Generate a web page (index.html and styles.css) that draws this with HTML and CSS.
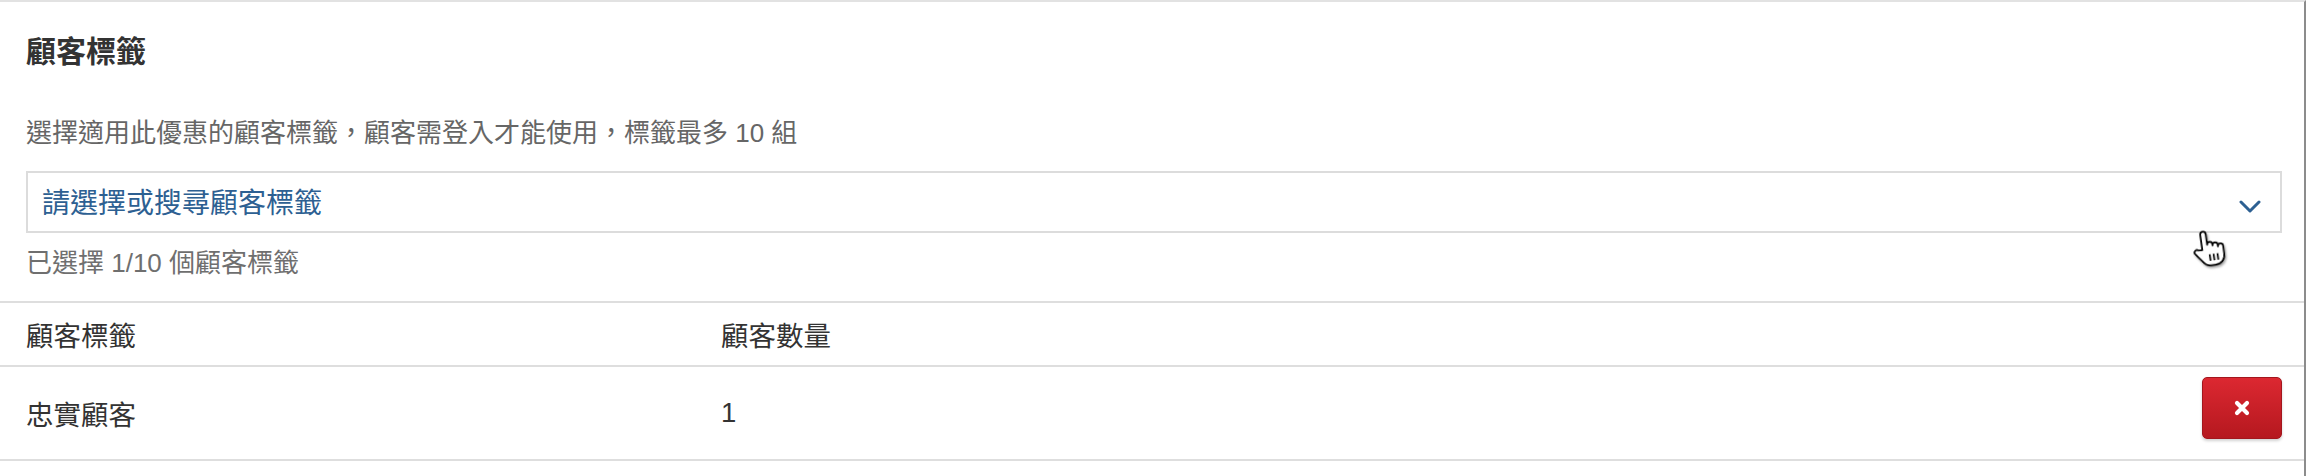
FILE: index.html
```html
<!DOCTYPE html>
<html lang="zh-Hant">
<head>
    <meta charset="UTF-8">
    <meta name="viewport" content="width=device-width, initial-scale=1.0">
    <title>顧客標籤</title>
    <link rel="stylesheet" href="styles.css">
</head>
<body>

    <div class="panel">
        <section class="tag-section">
            <h2 class="section-title">顧客標籤</h2>
            <p class="section-desc">選擇適用此優惠的顧客標籤，顧客需登入才能使用，標籤最多 10 組</p>

            <div class="tag-select">
                <span class="tag-select-placeholder">請選擇或搜尋顧客標籤</span>
                <svg class="tag-select-arrow" width="22" height="13" viewBox="0 0 22 13">
                    <polyline points="2,2 11,11 20,2" fill="none" stroke="currentColor" stroke-width="3" stroke-linecap="round" stroke-linejoin="round"/>
                </svg>
            </div>

            <p class="tag-count">已選擇 1/10 個顧客標籤</p>
        </section>

        <!-- Selected tags -->
        <div class="tag-table">
            <div class="tag-row tag-head">
                <div class="tag-cell">顧客標籤</div>
                <div class="tag-cell">顧客數量</div>
                <div class="tag-cell"></div>
            </div>
            <div class="tag-row tag-body">
                <div class="tag-cell">忠實顧客</div>
                <div class="tag-cell">1</div>
                <div class="tag-cell tag-action">
                    <button class="btn-remove" type="button" aria-label="移除">
                        <svg width="16" height="16" viewBox="0 0 16 16">
                            <path d="M3 3 L13 13 M13 3 L3 13" stroke="#fff" stroke-width="4.2" stroke-linecap="round"/>
                        </svg>
                    </button>
                </div>
            </div>
        </div>

        <!-- mouse pointer captured in the screenshot -->
        <svg class="pointer" width="34" height="40" viewBox="0 0 26 30">
            <path d="M8.5 16 V4.2 a2.1 2.1 0 0 1 4.2 0 V12.5 a2 2 0 0 1 4 0 V13.5 a2 2 0 0 1 4 0 V14.8 a2 2 0 0 1 4 0 V21 c0 4.5 -3 7.5 -7.5 7.5 H13.8 c-3 0 -4.8 -1.6 -6.4 -4 L2.6 18.3 a1.9 1.9 0 0 1 2.9 -2.4 Z" fill="#fff" stroke="#000" stroke-width="1.3" stroke-linejoin="round"/>
            <path d="M13.6 20 V25 M16.6 20 V25 M19.6 20 V25" stroke="#000" stroke-width="1.3"/>
        </svg>
    </div>

</body>
</html>
```

FILE: styles.css
```css
body {
    margin: 0;
    background-color: #fff;
    font-family: 'Liberation Sans', 'Noto Sans CJK TC', sans-serif;
    color: #333;
}

.panel {
    position: relative;
    height: 474px;
    overflow: hidden;
    border-top: 2px solid #e2e2e2;
    border-right: 2px solid #8c8c8c;
}

.tag-section {
    padding: 30px 22px 20px 26px;
}

.section-title {
    margin: 0;
    font-size: 30px;
    line-height: 40px;
    font-weight: bold;
    color: #333;
}

.section-desc {
    margin: 43px 0 0;
    font-size: 26px;
    line-height: 36px;
    color: #666;
}

.tag-select {
    margin-top: 20px;
    height: 58px;
    border: 2px solid #dcdcdc;
    padding: 0 19px 0 14px;
    display: flex;
    align-items: center;
    justify-content: space-between;
    color: #2d6092;
}

.tag-select-placeholder {
    padding-top: 3px;
    font-size: 28px;
    line-height: 36px;
}

.tag-select-arrow {
    margin-top: 9px;
}

.tag-count {
    margin: 12px 0 0;
    font-size: 26px;
    line-height: 36px;
    color: #6f6f6f;
}

.tag-table {
    border-top: 2px solid #dedede;
}

.tag-row {
    display: grid;
    grid-template-columns: 695px 1fr auto;
    border-bottom: 2px solid #dedede;
}

.tag-head {
    height: 62px;
}

.tag-body {
    height: 92px;
}

.tag-cell {
    display: flex;
    align-items: center;
    padding-left: 26px;
    font-size: 27.5px;
    color: #333;
}

.tag-action {
    align-items: flex-start;
    padding: 10px 22px 0 0;
}

.btn-remove {
    width: 80px;
    height: 62px;
    border: 1px solid #a3161d;
    border-radius: 5px;
    background: linear-gradient(#dc2831, #b5181f);
    box-shadow: 0 2px 3px rgba(0, 0, 0, 0.18);
    display: flex;
    align-items: center;
    justify-content: center;
    cursor: pointer;
}

.pointer {
    position: absolute;
    left: 2191px;
    top: 226px;
    transform: rotate(-8deg);
    filter: drop-shadow(1px 2px 1px rgba(0, 0, 0, 0.35));
}
```
